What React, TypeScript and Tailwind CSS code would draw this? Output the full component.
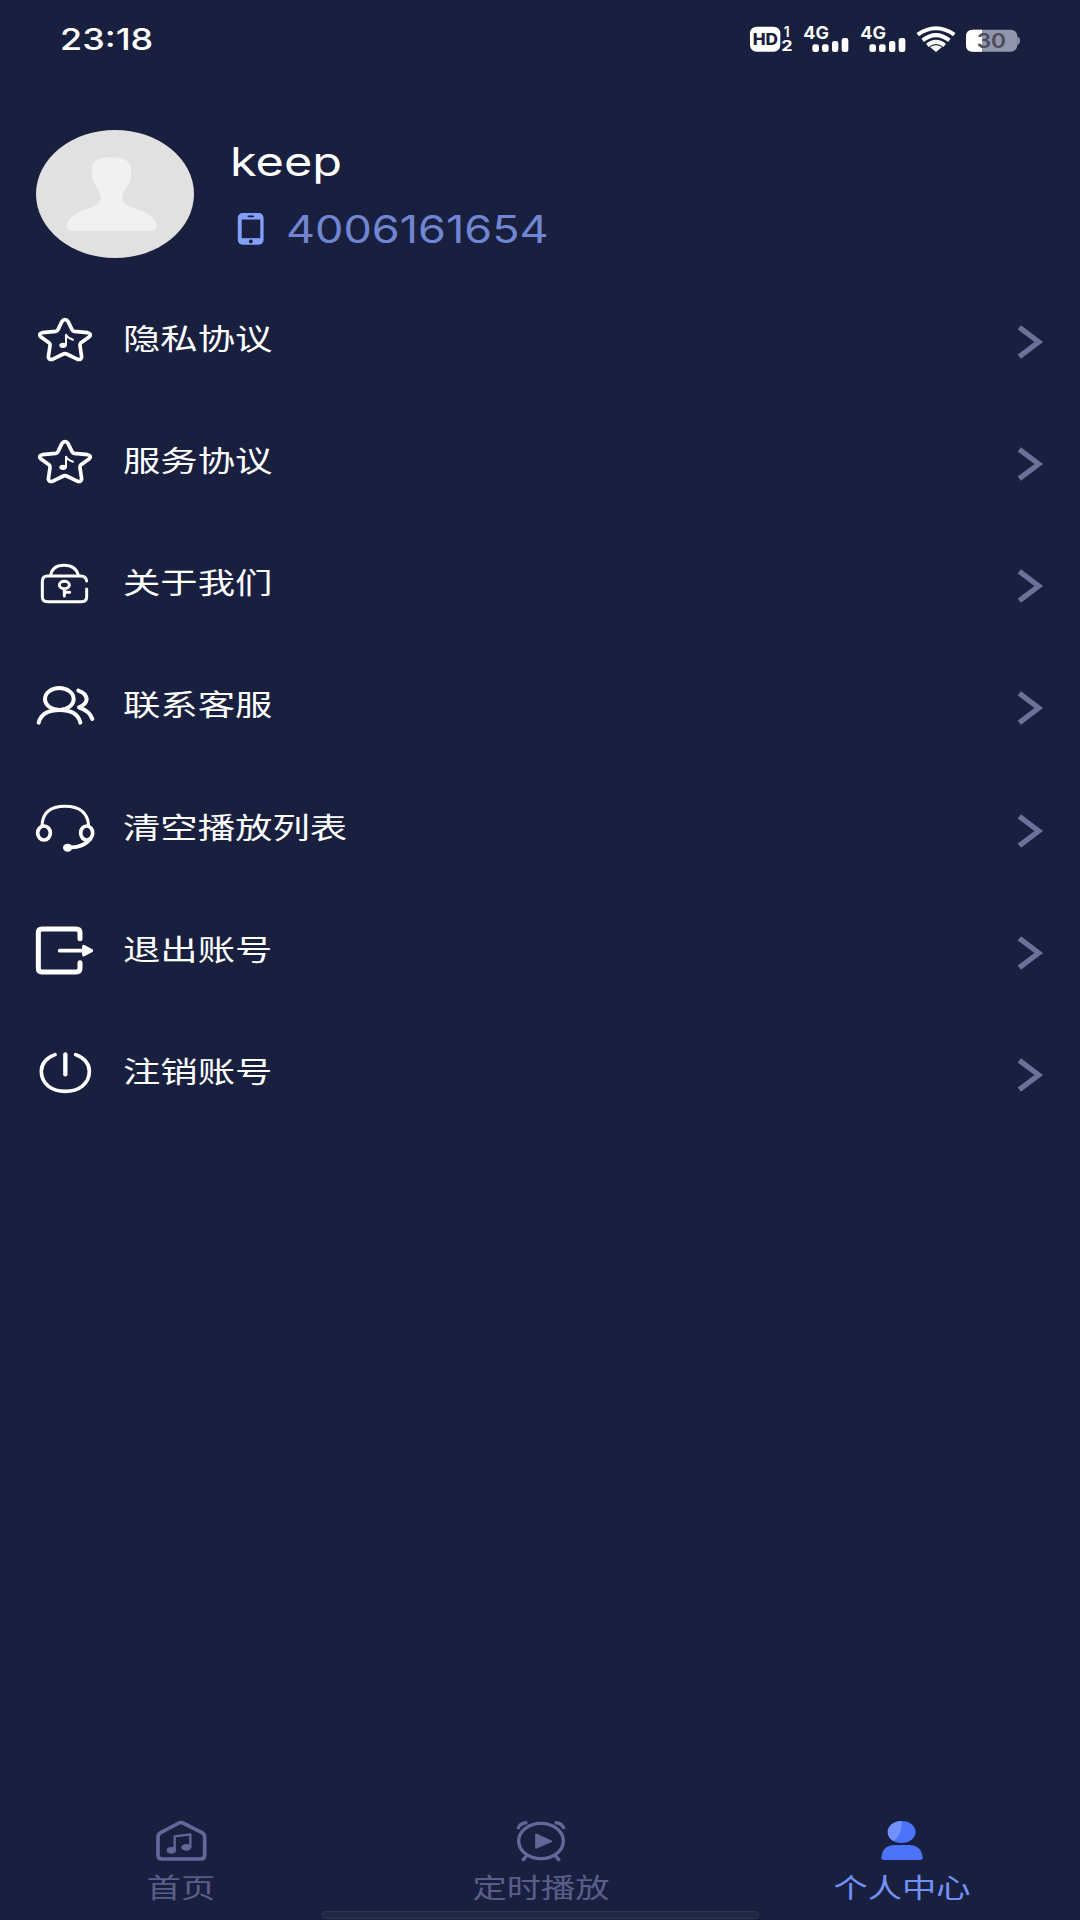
import type { ReactNode } from 'react';

function Signal() {
  return (
    <svg className="h-[30px] w-[46px]" viewBox="219 40 138 90" fill="#fff">
      <text x="220" y="86" fontFamily="Inter, sans-serif" fontWeight="700" fontSize="50" textLength="77" lengthAdjust="spacingAndGlyphs">4G</text>
      <rect x="247" y="101" width="20" height="23" rx="7" />
      <rect x="276" y="101" width="20" height="23" rx="7" />
      <rect x="306" y="91" width="19" height="33" rx="7" />
      <rect x="335" y="82" width="20" height="42" rx="7" />
    </svg>
  );
}

function StatusBar() {
  return (
    <header className="flex h-[78px] items-center justify-between pl-[60px] pr-[59px]">
      <span className="origin-left scale-x-[1.2] text-[30px] font-medium leading-none">23:18</span>
      <div className="flex items-center">
        <svg className="h-[30px] w-[44px]" viewBox="57 40 132 90">
          <rect x="60" y="48" width="91" height="75" rx="20" fill="#fff" />
          <text x="68" y="103" fontFamily="Inter, sans-serif" fontWeight="800" fontSize="46" fill="#1a1f3f" textLength="76" lengthAdjust="spacingAndGlyphs">HD</text>
          <text x="161" y="79" fontFamily="Inter, sans-serif" fontWeight="600" fontSize="42" fill="#fff">1</text>
          <text x="154" y="121" fontFamily="Inter, sans-serif" fontWeight="700" fontSize="42" fill="#fff" textLength="34" lengthAdjust="spacingAndGlyphs">2</text>
        </svg>
        <div className="ml-[10px] flex"><Signal /></div>
        <div className="ml-[11px] flex"><Signal /></div>
        <svg className="ml-[10px] h-[30px] w-[41px]" viewBox="558 40 123 90" fill="none" stroke="#fff" strokeWidth="12">
          <path d="M563 72Q618 34 673 72" />
          <path d="M578 89Q618 58 658 89" />
          <path d="M592 104Q618 83 644 104" />
          <path d="M600 109Q618 99 636 109L618 124Z" fill="#fff" stroke="none" />
        </svg>
        <svg className="ml-[8px] h-[30px] w-[56px]" viewBox="705 40 168 90">
          <rect x="708" y="57" width="154" height="66" rx="20" fill="#9196ad" />
          <path d="M728 57H756V123H728Q708 123 708 103V77Q708 57 728 57Z" fill="#fff" />
          <path d="M862 78Q870 80 870 90T862 103Z" fill="#9196ad" />
          <text x="740" y="113" fontFamily="Inter, sans-serif" fontWeight="600" fontSize="62" fill="#4b4d5e" textLength="88" lengthAdjust="spacingAndGlyphs">30</text>
        </svg>
      </div>
    </header>
  );
}

function Profile() {
  return (
    <section className="flex h-[201px] pl-[36px] pt-[52px]">
      <div className="h-[128px] w-[158px] overflow-hidden rounded-[50%] bg-[#e1e1e1]">
        <svg className="h-[128px] w-[158px]" viewBox="48 60 474 384" fill="#f1f1f1">
          <path d="M216 170Q220 142 274 142Q328 142 333 172Q336 205 327 222Q308 246 306 262Q308 284 340 294Q408 316 409 346Q409 362 396 362H154Q140 362 140 346Q144 316 208 294Q240 284 243 262Q240 246 224 222Q212 205 216 170Z" />
        </svg>
      </div>
      <div className="ml-[36px] flex flex-col">
        <span className="mt-[8px] h-[48px] origin-left scale-x-[1.215] self-start text-[40px] leading-[48px]">keep</span>
        <div className="mt-[19px] flex h-[48px] items-center">
          <svg className="ml-[7px] h-[32px] w-[28px]" viewBox="53 278 81 98">
            <rect x="53" y="278" width="79" height="97" rx="15" fill="#83a0fd" />
            <rect x="65" y="298" width="57" height="57" fill="#1a1f3f" />
            <rect x="83" y="286" width="20" height="5" rx="2" fill="#1a1f3f" />
            <circle cx="93" cy="365" r="6" fill="#1a1f3f" />
          </svg>
          <span className="ml-[21px] origin-left scale-x-[1.184] text-[38px] leading-[48px] text-[#7186d2]">4006161654</span>
        </div>
      </div>
    </section>
  );
}

function Icon({ viewBox, width = 11, children }: { viewBox: string; width?: number; children: ReactNode }) {
  return (
    <svg className="h-[60px] w-[60px] shrink-0" viewBox={viewBox} fill="none" stroke="#fff" strokeWidth={width} strokeLinecap="round" strokeLinejoin="round">
      {children}
    </svg>
  );
}

const star = (
  <Icon viewBox="45 30 180 180">
    <path d="M126 64Q129 59 135 59T144 64L156 89Q158 93 163 94L203 98Q216 101 208 110L182 129Q179 132 180 137L185 171Q184 180 173 178L140 162Q135 160 130 162L97 178Q86 180 85 171L90 137Q91 132 88 129L62 110Q54 101 67 98L107 94Q112 93 114 89Z" />
    <ellipse cx="129" cy="136" rx="11" ry="8" fill="#fff" stroke="none" />
    <path d="M138 135V104Q142 114 159 119" strokeWidth="6" />
  </Icon>
);

const lock = (
  <Icon viewBox="45 42 180 180" width={9}>
    <path d="M200 123Q198 108 182 108H83Q67 108 67 124V170Q67 185 83 185H184Q200 185 200 170V147" />
    <path d="M92 106Q97 76 132 76T175 106" />
    <ellipse cx="133" cy="135" rx="15" ry="11" strokeWidth="9" />
    <path d="M133 147V168M133 157H149" strokeWidth="9" />
  </Icon>
);

const people = (
  <Icon viewBox="45 409 180 180" width={12}>
    <ellipse cx="118" cy="478" rx="43" ry="33" />
    <path d="M56 549Q66 511 119 511T181 549" />
    <path d="M175 453Q198 460 200 479Q198 495 177 503Q209 514 217 538" />
  </Icon>
);

const headset = (
  <Icon viewBox="45 57 180 180" width={9}>
    <path d="M66 138Q68 79 135 79T206 138" />
    <ellipse cx="72" cy="159" rx="19" ry="21" strokeWidth="11" />
    <ellipse cx="200" cy="159" rx="18" ry="21" strokeWidth="11" />
    <path d="M211 177Q190 203 150 202" strokeWidth="11" />
    <ellipse cx="143" cy="203" rx="14" ry="12" fill="#fff" stroke="none" />
  </Icon>
);

const exit = (
  <Icon viewBox="45 423 180 180" width={15}>
    <path d="M180 476V458Q180 447 168 447H66Q55 447 55 458V565Q55 576 66 576H168Q180 576 180 565V548" />
    <path d="M119 512H188" strokeWidth="11" />
    <path d="M191 499L215 512L191 525Z" fill="#fff" strokeWidth="9" />
  </Icon>
);

const power = (
  <Icon viewBox="45 9 180 180" width={11}>
    <path d="M105 44Q64 60 64 94C64 132 96 154 136 154S208 132 208 94Q208 60 167 44" />
    <path d="M136 43V103" strokeWidth="13" />
  </Icon>
);

const items: { label: string; icon: ReactNode }[] = [
  { label: '隐私协议', icon: star },
  { label: '服务协议', icon: star },
  { label: '关于我们', icon: lock },
  { label: '联系客服', icon: people },
  { label: '清空播放列表', icon: headset },
  { label: '退出账号', icon: exit },
  { label: '注销账号', icon: power },
];

function Menu() {
  return (
    <ul className="flex h-[855px] flex-col">
      {items.map((item) => (
        <li key={item.label} className="flex flex-1 items-center pl-[35px] pr-[36px]">
          {item.icon}
          <span className="-mt-[1px] ml-[28px] origin-left scale-x-[1.288] whitespace-nowrap text-[29px] leading-none">{item.label}</span>
          <svg className="ml-auto mt-[4px] h-[36px] w-[27px]" viewBox="109 71 81 108" fill="none" stroke="#6b7299" strokeWidth="16">
            <path d="M116 81L174 125L116 169" />
          </svg>
        </li>
      ))}
    </ul>
  );
}

function Tab({ label, color, children }: { label: string; color: string; children: ReactNode }) {
  return (
    <div className={`flex flex-col items-center ${color}`}>
      {children}
      <span className="mt-[12px] scale-x-[1.27] text-[27px] leading-[30px]">{label}</span>
    </div>
  );
}

function TabBar() {
  return (
    <nav className="ml-[1px] mt-auto grid h-[100px] w-[1081px] grid-cols-3">
      <Tab label="首页" color="text-[#595e88]">
        <svg className="h-[42px] w-[52px]" viewBox="107 60 156 126" fill="none" stroke="#63689a" strokeWidth="11" strokeLinejoin="round">
          <path d="M179 69Q185 66 191 69L248 98Q256 103 256 111V166Q256 177 244 177H128Q116 177 116 166V111Q116 103 124 98Z" />
          <path d="M166 150V109L213 103V142" strokeWidth="7" />
          <ellipse cx="156" cy="151" rx="14" ry="10" fill="#63689a" stroke="none" />
          <ellipse cx="201" cy="142" rx="15" ry="10" fill="#63689a" stroke="none" />
        </svg>
      </Tab>
      <Tab label="定时播放" color="text-[#595e88]">
        <svg className="h-[42px] w-[52px]" viewBox="228 60 156 126" fill="none" stroke="#63689a" strokeWidth="10">
          <ellipse cx="306" cy="123" rx="67" ry="53" />
          <path d="M237 87Q241 69 265 68M375 87Q371 69 347 68" />
          <path d="M265 165L250 182M347 165L362 182" />
          <path d="M291 103V144L337 124Z" fill="#63689a" strokeWidth="5" strokeLinejoin="round" />
        </svg>
      </Tab>
      <Tab label="个人中心" color="text-[#7291f5]">
        <svg className="h-[42px] w-[52px]" viewBox="229 60 156 126">
          <ellipse cx="306" cy="96" rx="42" ry="33" fill="#4b74fa" />
          <path d="M306 63C283 63 264 78 264 96Q265 116 283 124Q308 102 306 63Z" fill="#7391fd" />
          <path d="M245 172Q249 135 287 135H327Q365 135 369 172Q369 180 361 180H253Q245 180 245 172Z" fill="#4b74fa" />
        </svg>
      </Tab>
    </nav>
  );
}

export default function App() {
  return (
    <main className="relative flex h-[1920px] w-[1080px] flex-col overflow-hidden bg-[#191f3e] text-white [font-family:Inter,'Noto_Sans_CJK_SC',sans-serif]">
      <StatusBar />
      <Profile />
      <Menu />
      <TabBar />
      <div className="absolute bottom-[1px] left-[322px] h-[8px] w-[437px] rounded-full border border-[#30354f] bg-[#212642]" />
    </main>
  );
}
